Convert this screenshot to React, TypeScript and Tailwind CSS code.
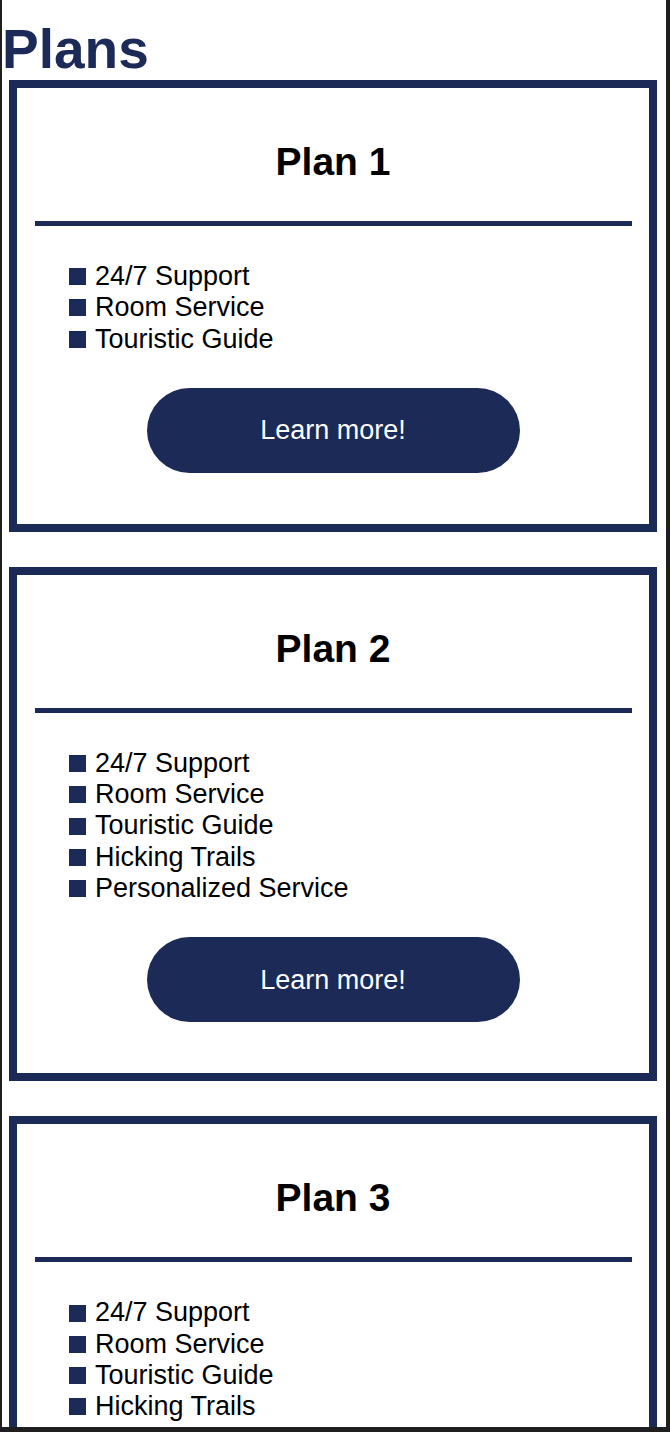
const plans = [
  { name: "Plan 1", perks: ["24/7 Support", "Room Service", "Touristic Guide"] },
  {
    name: "Plan 2",
    perks: ["24/7 Support", "Room Service", "Touristic Guide", "Hicking Trails", "Personalized Service"],
  },
  {
    name: "Plan 3",
    perks: [
      "24/7 Support",
      "Room Service",
      "Touristic Guide",
      "Hicking Trails",
      "Personalized Service",
      "Free Breakfast",
    ],
  },
];

function PlanCard({ name, perks }: { name: string; perks: string[] }) {
  return (
    <section className="ml-[7px] mr-[9px] border-8 border-[#1b2a57] bg-white">
      <h2 className="mt-[51px] text-center text-[39px] font-bold leading-[46px] text-black">{name}</h2>
      <hr className="ml-[18px] mr-[17px] mt-[36px] h-[5px] border-0 bg-[#1b2a57]" />
      <ul className="mt-[35px] pl-[52px]">
        {perks.map((perk) => (
          <li key={perk} className="flex items-center gap-[9px] text-[27px] leading-[31.3px] text-black">
            <span className="h-[17px] w-[17px] shrink-0 bg-[#1b2a57]" />
            {perk}
          </li>
        ))}
      </ul>
      <div className="mb-[51px] mt-[33px] flex justify-center">
        <button className="h-[85px] w-[373px] rounded-full bg-[#1b2a57] text-[27px] text-white">
          Learn more!
        </button>
      </div>
    </section>
  );
}

export default function App() {
  return (
    <div
      className="h-[1432px] w-[670px] overflow-hidden border-b-[5px] border-l-2 border-r-4 border-[#1f1f1f] bg-white"
      style={{ fontFamily: '"Liberation Sans", Arial, Helvetica, sans-serif' }}
    >
      <h1 className="mt-[19px] text-[55px] font-bold leading-[61px] text-[#1b2a57]">Plans</h1>
      <div className="flex flex-col gap-[35px]">
        {plans.map((plan) => (
          <PlanCard key={plan.name} name={plan.name} perks={plan.perks} />
        ))}
      </div>
    </div>
  );
}
